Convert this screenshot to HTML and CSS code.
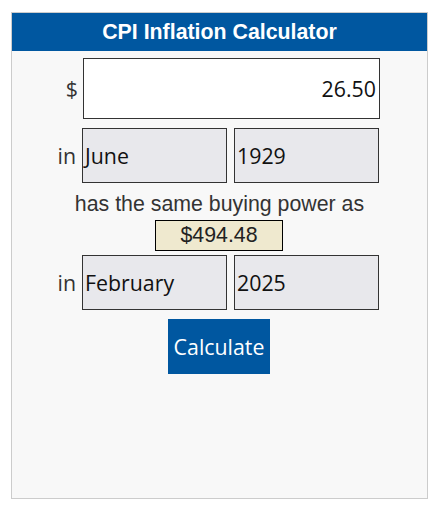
FILE: index.html
```
<!DOCTYPE html>
<html>
<head>
<meta charset="utf-8">
<link rel="stylesheet" href="styles.css">
</head>
<body>
<div class="calc">
  <div class="calc-head">CPI Inflation Calculator</div>
  <div class="calc-body">
    <div class="row">
      <span class="lbl lbl-dollar">$</span>
      <div class="field amount">26.50</div>
    </div>
    <div class="row">
      <span class="lbl">in</span>
      <div class="field sel">June</div>
      <div class="field sel">1929</div>
    </div>
    <div class="same">has the same buying power as</div>
    <div class="result">$494.48</div>
    <div class="row">
      <span class="lbl">in</span>
      <div class="field sel">February</div>
      <div class="field sel">2025</div>
    </div>
    <div class="btn">Calculate</div>
  </div>
</div>
</body>
</html>
```
FILE: styles.css
```
html, body { margin: 0; padding: 0; background: #ffffff; }
body { font-family: "Open Sans", sans-serif; }
.calc {
  margin: 12px 0 0 11px;
  width: 417px;
  height: 487px;
  box-sizing: border-box;
  border: 1px solid #cccccc;
  background: #f8f8f8;
}
.calc-head {
  height: 38px;
  background: #0057a0;
  color: #ffffff;
  font-family: "Liberation Sans", Arial, sans-serif;
  font-weight: bold;
  font-size: 21.33px;
  display: flex;
  align-items: center;
  justify-content: center;
}
.calc-body {
  display: flex;
  flex-direction: column;
  align-items: flex-start;
  padding-top: 7px;
}
.row { display: flex; align-items: center; margin-bottom: 9px; }
.lbl {
  width: 64px;
  text-align: right;
  font-size: 21.33px;
  color: #333333;
  margin-right: 6px;
}
.lbl-dollar { width: 66px; margin-right: 4px; }
.field {
  box-sizing: border-box;
  border: 1px solid #333333;
  font-size: 21.33px;
  color: #111111;
  display: flex;
  align-items: center;
}
.amount {
  width: 297px;
  height: 61px;
  margin-left: 1px;
  background: #ffffff;
  justify-content: flex-end;
  padding-right: 3px;
}
.sel {
  width: 145px;
  height: 55px;
  background: #e8e8ec;
  padding-left: 2px;
  margin-right: 7px;
}
.same {
  align-self: stretch;
  text-align: center;
  font-family: "Liberation Sans", Arial, sans-serif;
  font-size: 21.33px;
  line-height: 24px;
  height: 24px;
  color: #333333;
}
.result {
  margin-left: 143px;
  margin-top: 4px;
  margin-bottom: 4px;
  width: 128px;
  height: 31px;
  box-sizing: border-box;
  border: 1px solid #000000;
  background: #efe9cf;
  font-family: "Liberation Sans", Arial, sans-serif;
  font-size: 21.33px;
  color: #222222;
  display: flex;
  align-items: center;
  justify-content: center;
}
.btn {
  margin-left: 156px;
  width: 102px;
  height: 55px;
  background: #0057a0;
  color: #ffffff;
  font-size: 21.33px;
  display: flex;
  align-items: center;
  justify-content: center;
}
```
